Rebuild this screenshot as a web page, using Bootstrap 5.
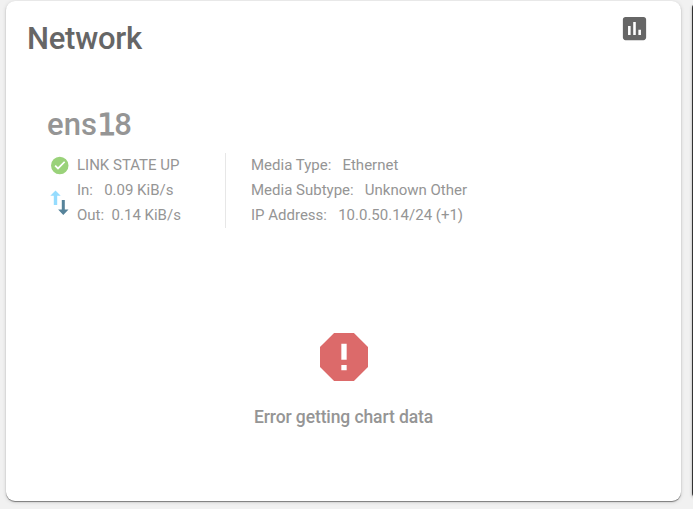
<!DOCTYPE html>
<html lang="en">
<head>
<meta charset="utf-8">
<meta name="viewport" content="width=device-width, initial-scale=1">
<title>Network</title>
<link href="https://cdn.jsdelivr.net/npm/bootstrap@5.3.0/dist/css/bootstrap.min.css" rel="stylesheet">
<style>
body{background:#f1f1f1;height:509px;overflow:hidden;font-family:Roboto,sans-serif;color:#959595}
.net-card{width:675px;height:500px;margin:1px 0 0 6px;border:0;border-radius:9px;box-shadow:0 1px 1px rgba(0,0,0,.45),0 1px 4px rgba(0,0,0,.14)}
.next-card{width:30px;height:493px;margin:4px 0 0 11px;background:#333;border-radius:4px 0 0 4px;box-shadow:0 1px 3px rgba(0,0,0,.3)}
.net-head{height:76px;padding:12px 31px 0 21px}
.net-title{font:500 31px/46px Roboto,sans-serif;color:#666;letter-spacing:-.25px;padding-top:3px}
.net-body{padding:26px 0 0 41px}
.nic-name{font:500 31px/44px Roboto,sans-serif;color:#959595;letter-spacing:.1px}
.nic-name span{font:400 30px/44px "DejaVu Sans",sans-serif;letter-spacing:-2px;-webkit-text-stroke:.9px #959595}
.nic-info{margin-top:6px;font-size:15px;line-height:25px}
.nic-info .nic-text{white-space:pre}
.nic-state{width:179px;height:75px;border-right:1px solid #e7e7e7}
.nic-icons{width:30px;padding-left:2px}
.nic-media{padding-left:25px}
.err-msg{font:500 17.5px/24px Roboto,sans-serif;letter-spacing:-.1px;color:#959595;margin-top:16px}
.err-box{padding-top:97px}
svg{display:block;flex:none}
</style>
</head>
<body class="d-flex align-items-start">
<main class="card net-card flex-shrink-0">
  <header class="net-head d-flex justify-content-between align-items-start">
    <h1 class="net-title m-0">Network</h1>
    <svg width="31" height="31" viewBox="0 0 24 24" fill="#666"><path d="M19 3H5c-1.1 0-2 .9-2 2v14c0 1.1.9 2 2 2h14c1.1 0 2-.9 2-2V5c0-1.1-.9-2-2-2zM9 17H7v-7h2v7zm4 0h-2V7h2v10zm4 0h-2v-4h2v4z"/></svg>
  </header>
  <section class="net-body">
    <h2 class="nic-name m-0">ens<span>1</span>8</h2>
    <div class="nic-info d-flex">
      <div class="nic-state d-flex">
        <div class="nic-icons">
          <svg width="21" height="25" viewBox="0 0 24 28.57"><path fill="#9ad27a" d="M12.300 4.300a10 10 0 1 0 0 20a10 10 0 1 0 0-20z"/><path fill="none" stroke="#fff" stroke-width="2" d="m7 14.300 3.300 3.300 7.600-7.600"/></svg>
          <svg width="21" height="38" viewBox="0 0 21 38"><path fill="#95dcfe" d="M6.500 12.500 11.700 17.700H8.200v9.300H4.800v-9.300H1.300z"/><path fill="#56839a" d="M12.800 22h3v9.500h3.700l-5.200 5.500-5.200-5.500h3.700z"/></svg>
        </div>
        <div class="nic-text"><div>LINK STATE UP</div><div>In:   0.09 KiB/s</div><div>Out:  0.14 KiB/s</div></div>
      </div>
      <div class="nic-media nic-text"><div>Media Type:   Ethernet</div><div>Media Subtype:   Unknown Other</div><div>IP Address:   10.0.50.14/24 (+1)</div></div>
    </div>
  </section>
  <section class="err-box d-flex flex-column align-items-center">
    <svg width="64" height="64" viewBox="0 0 24 24" fill="#dc6a6a"><path d="M13 13h-2V7h2m0 10h-2v-2h2M15.73 3H8.27L3 8.27v7.46L8.27 21h7.46L21 15.73V8.27z"/></svg>
    <div class="err-msg">Error getting chart data</div>
  </section>
</main>
<aside class="next-card flex-shrink-0"></aside>
<script src="https://cdn.jsdelivr.net/npm/bootstrap@5.3.0/dist/js/bootstrap.bundle.min.js"></script>
</body>
</html>
